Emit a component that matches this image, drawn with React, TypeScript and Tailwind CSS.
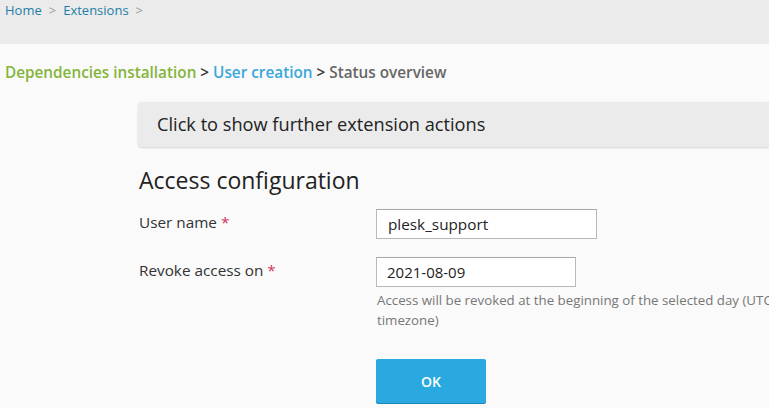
export default function App() {
  const font = { fontFamily: '"Open Sans", "Noto Sans", sans-serif' }
  return (
    <div style={font} className="min-h-[408px] w-[769px] overflow-hidden bg-[#fafafa] text-[#222]">
      <div className="h-[44px] bg-[#ebebeb] pl-[5px] pt-[1px] text-[13px] leading-[18px]">
        <span className="text-[#1f7ea8]">Home</span>
        <span className="mx-[7px] text-[#999]">&gt;</span>
        <span className="text-[#1f7ea8]">Extensions</span>
        <span className="mx-[7px] text-[#999]">&gt;</span>
      </div>

      <div className="mt-[18px] pl-[5px] text-[15.3px] font-semibold leading-[20px]">
        <span className="text-[#84b43a]">Dependencies installation</span>
        <span className="text-[#333]"> &gt; </span>
        <span className="text-[#3aa7dc]">User creation</span>
        <span className="text-[#333]"> &gt; </span>
        <span className="text-[#666]">Status overview</span>
      </div>

      <div className="ml-[138px] mt-[20px]">
        <div className="flex h-[45px] items-center rounded-l-[4px] bg-[#ebebeb] pl-[19px] text-[18.2px] font-medium text-[#222] shadow-[0_1px_2px_rgba(0,0,0,0.15)]">
          Click to show further extension actions
        </div>

        <h2 className="mt-[18px] pl-[1px] text-[23px] font-normal leading-[30px] text-[#222]">Access configuration</h2>

        <div className="mt-[14px] flex items-start">
          <div className="w-[238px] shrink-0 pl-[1px] pt-[2px] text-[15.3px] text-[#333]">
            User name <span className="text-[#d2335a]">*</span>
          </div>
          <div className="flex h-[30px] w-[221px] items-center border border-[#b9b9b9] border-t-[#a8a8a8] bg-white pl-[11px] text-[15.3px] text-[#222]">
            plesk_support
          </div>
        </div>

        <div className="mt-[18px] flex items-start">
          <div className="w-[238px] shrink-0 pl-[1px] pt-[2px] text-[15.3px] text-[#333]">
            Revoke access on <span className="text-[#d2335a]">*</span>
          </div>
          <div>
            <div className="flex h-[30px] w-[200px] items-center border border-[#b9b9b9] border-t-[#a8a8a8] bg-white pl-[10px] text-[15px] text-[#222]">
              2021-08-09
            </div>
            <div className="mt-[3px] w-[400px] pl-[1px] text-[13.3px] leading-[20px] text-[#777]">
              Access will be revoked at the beginning of the selected day (UTC timezone)
            </div>
          </div>
        </div>

        <div className="ml-[238px] mt-[29px]">
          <button className="h-[44px] w-[110px] rounded-[2px] bg-[#29a9df] text-[14px] font-semibold text-white shadow-[0_1px_0_#1b87b5]">
            OK
          </button>
        </div>
      </div>
    </div>
  )
}
